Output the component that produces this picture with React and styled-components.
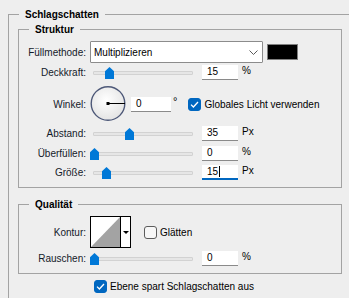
import React from 'react';
import styled, { createGlobalStyle } from 'styled-components';

const GlobalStyle = createGlobalStyle`
  html, body {
    margin: 0;
    padding: 0;
    background: #eeeeee;
    overflow: hidden;
  }
  body {
    font-family: "Liberation Sans", Arial, sans-serif;
    font-size: 10px;
    color: #111111;
  }
`;

const sliders = {
  deckkraft: { pos: 15, value: '15', unit: '%' },
  abstand: { pos: 35, value: '35', unit: 'Px' },
  ueberfuellen: { pos: 0, value: '0', unit: '%' },
  groesse: { pos: 12, value: '15', unit: 'Px', focused: true },
  rauschen: { pos: 0, value: '0', unit: '%' },
};

const Checkmark = () => (
  <svg width="9" height="7" viewBox="0 0 9 7">
    <path d="M1 3.6 L3.4 6 L8 1" fill="none" stroke="#ffffff" strokeWidth="1.3" />
  </svg>
);

const Chevron = () => (
  <svg width="9" height="5" viewBox="0 0 9 5">
    <path d="M0.5 0.5 L4.5 4.5 L8.5 0.5" fill="none" stroke="#5a5a5a" strokeWidth="1" />
  </svg>
);

const AngleDial = () => (
  <svg width="36" height="36" viewBox="0 0 36 36">
    <defs>
      <radialGradient id="dialFill" cx="45%" cy="40%" r="60%">
        <stop offset="0%" stopColor="#ffffff" />
        <stop offset="100%" stopColor="#e4e4e4" />
      </radialGradient>
    </defs>
    <circle cx="18" cy="17.5" r="16.8" fill="url(#dialFill)" stroke="#4d5878" strokeWidth="1.4" />
    <line x1="18" y1="17.5" x2="35" y2="17.5" stroke="#000000" strokeWidth="1" />
    <rect x="16.5" y="16" width="3" height="3" fill="#000000" />
  </svg>
);

const ContourPreview = () => (
  <svg width="29" height="30" viewBox="0 0 29 30">
    <rect width="29" height="30" fill="#ffffff" />
    <polygon points="0,30 29,0 29,30" fill="#a3a3a3" />
  </svg>
);

const Page = styled.div`
  width: 349px;
  height: 298px;
  box-sizing: border-box;
  padding: 7px 0 0 8px;
  overflow: hidden;
`;

const OuterGroup = styled.fieldset`
  margin: 0;
  width: 420px;
  min-height: 320px;
  box-sizing: border-box;
  padding: 0 0 0 9px;
  border: 1px solid #a3a3a3;
  border-right: none;
  border-bottom: none;
`;

const Group = styled.fieldset`
  margin: ${p => p.$mt || 0}px 0 0 0;
  width: 324px;
  box-sizing: border-box;
  padding: 4px 0 ${p => p.$pb}px 9px;
  border: 1px solid #a3a3a3;
`;

const Legend = styled.legend`
  margin-left: 1px;
  padding: 0 6px;
  font-weight: bold;
  line-height: 15px;
  color: #000000;
`;

const Row = styled.div`
  display: flex;
  align-items: center;
  height: ${p => p.$h || 16}px;
  margin-top: ${p => p.$mt || 0}px;
`;

const Label = styled.span`
  width: 58px;
  margin-right: 4px;
  text-align: right;
  white-space: nowrap;
  color: #141a2a;
`;

const Select = styled.div`
  width: 173px;
  height: 22px;
  box-sizing: border-box;
  display: flex;
  align-items: center;
  justify-content: space-between;
  padding: 0 4px 0 3px;
  background: #ffffff;
  border: 1px solid #8c8c8c;
  border-radius: 1px;
  color: #000000;
`;

const Swatch = styled.div`
  width: 31px;
  height: 16px;
  margin-left: 4px;
  box-sizing: border-box;
  background: #000000;
  border: 1px solid #808080;
`;

const Slider = styled.div`
  position: relative;
  width: 106px;
  height: 16px;
  margin-right: 6px;
`;

const Track = styled.div`
  position: absolute;
  left: 3px;
  top: 7px;
  width: 100px;
  height: 4px;
  box-sizing: border-box;
  background: #e6e6e6;
  border: 1px solid #d2d2d2;
  border-radius: 1px;
`;

const Thumb = styled.div`
  position: absolute;
  top: 3px;
  left: ${p => p.$pos}px;
  width: 9px;
  height: 12px;
  background: #0078d7;
  clip-path: polygon(50% 0, 100% 36%, 100% 100%, 0 100%, 0 36%);
`;

const NumField = styled.div`
  position: relative;
  display: flex;
  align-items: center;
  width: ${p => p.$w || 36}px;
  height: 15px;
  box-sizing: border-box;
  padding-left: 5px;
  background: #ffffff;
  border-bottom: ${p => (p.$focused ? '2px solid #0067c0' : '1px solid #8a8a8a')};
  color: #000000;
`;

const Caret = styled.span`
  width: 1px;
  height: 11px;
  margin-left: 1px;
  background: #000000;
`;

const Unit = styled.span`
  margin-left: 4px;
  margin-bottom: 3px;
  color: #000000;
`;

const Degree = styled.span`
  margin-left: 2px;
  margin-bottom: 6px;
  font-size: 11px;
  color: #000000;
`;

const Check = styled.span`
  display: inline-flex;
  align-items: center;
  justify-content: center;
  width: 13px;
  height: 13px;
  box-sizing: border-box;
  margin-left: ${p => p.$ml || 0}px;
  border-radius: 3px;
  background: ${p => (p.$checked ? '#0067c0' : '#f7f7f7')};
  border: 1px solid ${p => (p.$checked ? '#0067c0' : '#5c5c5c')};
`;

const CheckText = styled.span`
  margin-left: 3px;
  color: #000000;
  white-space: nowrap;
`;

const Contour = styled.div`
  display: flex;
  width: 41px;
  height: 32px;
  box-sizing: border-box;
  border: 1px solid #000000;
  background: #ffffff;
`;

const ContourArrow = styled.div`
  flex: 1;
  display: flex;
  align-items: center;
  justify-content: center;
  border-left: 1px solid #000000;

  &::after {
    content: '';
    border-left: 3px solid transparent;
    border-right: 3px solid transparent;
    border-top: 3px solid #000000;
  }
`;

const FooterRow = styled.div`
  display: flex;
  align-items: center;
  height: 13px;
  margin-top: 6px;
  padding-left: 76px;
`;

const SliderRow = ({ label, data, mt }) => (
  <Row $mt={mt}>
    <Label>{label}</Label>
    <Slider>
      <Track />
      <Thumb $pos={data.pos} />
    </Slider>
    <NumField $focused={data.focused}>
      {data.value}
      {data.focused && <Caret />}
    </NumField>
    <Unit>{data.unit}</Unit>
  </Row>
);

export default function App() {
  return (
    <>
      <GlobalStyle />
      <Page>
        <OuterGroup>
          <Legend>Schlagschatten</Legend>

          <Group $pb={7}>
            <Legend>Struktur</Legend>
            <Row $h={22}>
              <Label>Füllmethode:</Label>
              <Select>
                <span>Multiplizieren</span>
                <Chevron />
              </Select>
              <Swatch />
            </Row>
            <SliderRow label="Deckkraft:" data={sliders.deckkraft} mt={1} />
            <Row $h={36} $mt={6}>
              <Label>Winkel:</Label>
              <AngleDial />
              <NumField $w={40} style={{ marginLeft: 5 }}>0</NumField>
              <Degree>°</Degree>
              <Check $checked $ml={11}>
                <Checkmark />
              </Check>
              <CheckText>Globales Licht verwenden</CheckText>
            </Row>
            <SliderRow label="Abstand:" data={sliders.abstand} mt={3} />
            <SliderRow label="Überfüllen:" data={sliders.ueberfuellen} mt={4} />
            <SliderRow label="Größe:" data={sliders.groesse} mt={3} />
          </Group>

          <Group $mt={9} $pb={7}>
            <Legend>Qualität</Legend>
            <Row $h={32}>
              <Label>Kontur:</Label>
              <Contour>
                <ContourPreview />
                <ContourArrow />
              </Contour>
              <Check $ml={13} />
              <CheckText>Glätten</CheckText>
            </Row>
            <SliderRow label="Rauschen:" data={sliders.rauschen} mt={2} />
          </Group>

          <FooterRow>
            <Check $checked>
              <Checkmark />
            </Check>
            <CheckText>Ebene spart Schlagschatten aus</CheckText>
          </FooterRow>
        </OuterGroup>
      </Page>
    </>
  );
}
